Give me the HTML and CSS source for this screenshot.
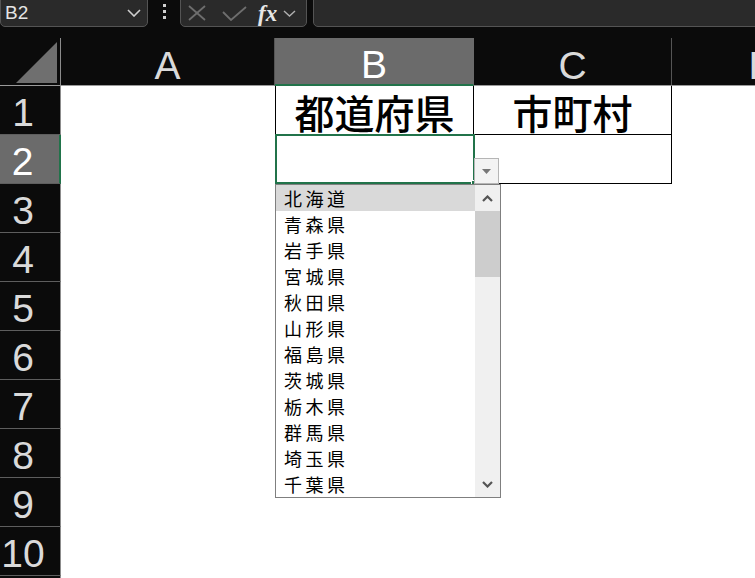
FILE: index.html
```html
<!DOCTYPE html>
<html lang="ja">
<head>
    <meta charset="UTF-8">
    <title>Book1 - Excel</title>
    <link rel="stylesheet" href="styles.css">
</head>
<body>
    <!-- name box + formula bar -->
    <div class="topbar">
        <div class="name-box">
            <span class="name-text">B2</span>
            <svg class="chevron" width="14" height="8" viewBox="0 0 14 8"><polyline points="1,1 7,7 13,1" /></svg>
        </div>
        <div class="bar-grip"><i></i><i></i><i></i></div>
        <div class="fx-tools">
            <svg class="tool-x" width="18" height="16" viewBox="0 0 18 16"><line x1="1" y1="1" x2="17" y2="15" /><line x1="17" y1="1" x2="1" y2="15" /></svg>
            <svg class="tool-check" width="25" height="15" viewBox="0 0 25 15"><polyline points="1,6 9,14 24,1" /></svg>
            <span class="tool-fx">fx</span>
            <svg class="chevron small" width="13" height="7" viewBox="0 0 13 7"><polyline points="1,1 6.5,6 12,1" /></svg>
        </div>
        <div class="formula-input"></div>
    </div>

    <!-- worksheet -->
    <div class="sheet">
        <div class="corner">
            <svg width="41" height="41" viewBox="0 0 41 41"><polygon points="41,0 41,41 0,41" /></svg>
        </div>
        <div class="col-head">A</div>
        <div class="col-head selected">B</div>
        <div class="col-head">C</div>
        <div class="col-head">D</div>

        <div class="row-head">1</div>
        <div class="row-head selected">2</div>
        <div class="row-head">3</div>
        <div class="row-head">4</div>
        <div class="row-head">5</div>
        <div class="row-head">6</div>
        <div class="row-head">7</div>
        <div class="row-head">8</div>
        <div class="row-head">9</div>
        <div class="row-head">10</div>
        <div class="row-head"></div>

        <div class="cell b1">都道府県</div>
        <div class="cell c1">市町村</div>
        <div class="cell c2"></div>
        <div class="cell b2">
            <div class="selection"><span class="fill-handle"></span></div>
            <div class="dropdown-btn">
                <svg width="9" height="5" viewBox="0 0 9 5"><polygon points="0,0 9,0 4.5,5" /></svg>
            </div>
            <div class="dropdown-list">
                <ul class="options">
                    <li class="active">北海道</li>
                    <li>青森県</li>
                    <li>岩手県</li>
                    <li>宮城県</li>
                    <li>秋田県</li>
                    <li>山形県</li>
                    <li>福島県</li>
                    <li>茨城県</li>
                    <li>栃木県</li>
                    <li>群馬県</li>
                    <li>埼玉県</li>
                    <li>千葉県</li>
                </ul>
                <div class="scrollbar">
                    <div class="scroll-btn">
                        <svg width="11" height="7" viewBox="0 0 11 7"><polyline points="1,6 5.5,1.5 10,6" /></svg>
                    </div>
                    <div class="scroll-thumb"></div>
                    <div class="scroll-track"></div>
                    <div class="scroll-btn">
                        <svg width="11" height="7" viewBox="0 0 11 7"><polyline points="1,1 5.5,5.5 10,1" /></svg>
                    </div>
                </div>
            </div>
        </div>
    </div>
</body>
</html>
```

FILE: styles.css
```css
body {
    margin: 0;
    background-color: #0b0b0b;
    font-family: "Liberation Sans", Arial, sans-serif;
    overflow: hidden;
}

/* ---------- formula bar ---------- */

.topbar {
    display: flex;
    align-items: flex-start;
    height: 27px;
}

.name-box,
.fx-tools,
.formula-input {
    box-sizing: border-box;
    height: 33px;
    margin-top: -6px;
    background-color: #2a2a2a;
    border: 1px solid #545454;
    border-radius: 5px;
}

.name-box {
    width: 148px;
    display: flex;
    align-items: center;
    justify-content: space-between;
    padding: 5px 6px 0 4px;
}

.name-text {
    color: #e4e4e4;
    font-size: 19px;
}

.chevron polyline {
    fill: none;
    stroke: #cfcfcf;
    stroke-width: 1.6;
}

.chevron.small polyline {
    stroke: #b0b0b0;
    stroke-width: 1.4;
}

.bar-grip {
    width: 32px;
    display: flex;
    flex-direction: column;
    align-items: center;
    gap: 3px;
    padding-top: 4px;
}

.bar-grip i {
    width: 3px;
    height: 3px;
    background-color: #cfcfcf;
}

.fx-tools {
    width: 127px;
    display: flex;
    align-items: center;
    padding: 5px 0 0 7px;
}

.tool-x line,
.tool-check polyline {
    fill: none;
    stroke: #6e6e6e;
    stroke-width: 1.8;
}

.tool-check {
    margin-left: 16px;
}

.tool-fx {
    margin-left: 11px;
    color: #e6e6e6;
    font-family: "Liberation Serif", serif;
    font-style: italic;
    font-weight: bold;
    font-size: 23px;
    line-height: 1;
}

.fx-tools .chevron {
    margin-left: 6px;
}

.formula-input {
    flex: 1;
    margin-left: 6px;
    margin-right: -8px;
}

/* ---------- grid ---------- */

.sheet {
    margin-top: 11px;
    display: grid;
    grid-template-columns: 61px 214px 199px 198px 182px;
    grid-template-rows: 48px repeat(11, 49px);
    background-color: #fff;
}

.corner {
    box-sizing: border-box;
    display: flex;
    justify-content: flex-end;
    align-items: flex-end;
    padding: 0 3px 2px 0;
    background-color: #0b0b0b;
    border-right: 1px solid #8c8c8c;
    border-bottom: 1px solid #9a9a9a;
}

.corner polygon {
    fill: #6f6f6f;
}

.col-head,
.row-head {
    box-sizing: border-box;
    display: flex;
    align-items: center;
    justify-content: center;
    background-color: #0b0b0b;
    color: #dadada;
    font-size: 39px;
}

.col-head {
    padding-top: 8px;
    border-right: 1px solid #555;
    border-bottom: 1px solid #9a9a9a;
}

.col-head.selected {
    background-color: #6b6b6b;
    color: #fff;
    border-right-color: #6b6b6b;
    border-bottom: 2px solid #21734a;
}

.row-head {
    grid-column: 1;
    padding: 5px 14px 0 0;
    border-right: 1px solid #8c8c8c;
    border-bottom: 1px solid #5e5e5e;
}

.row-head.selected {
    background-color: #6b6b6b;
    color: #fff;
    border-right: 2px solid #21734a;
}

/* ---------- cells ---------- */

.cell {
    box-sizing: border-box;
    display: flex;
    align-items: center;
    justify-content: center;
    font-family: "Noto Sans CJK JP", sans-serif;
    font-weight: 500;
    font-size: 40px;
    line-height: 1;
    color: #000;
    padding-top: 4px;
}

.b1 {
    grid-area: 2 / 3;
    border: 1px solid #000;
    border-top: none;
}

.c1 {
    grid-area: 2 / 4;
    border-right: 1px solid #000;
    border-bottom: 1px solid #000;
}

.b2 {
    grid-area: 3 / 3;
    position: relative;
    z-index: 2;
    border: 1px solid #000;
    border-top: none;
}

.c2 {
    grid-area: 3 / 4;
    border-right: 1px solid #000;
    border-bottom: 1px solid #000;
}

.selection {
    position: absolute;
    top: -1px;
    left: -1px;
    right: -2px;
    bottom: -1px;
    border: 2px solid #21734a;
}

.fill-handle {
    position: absolute;
    right: -5px;
    bottom: -5px;
    width: 5px;
    height: 5px;
    background-color: #21734a;
    border: 1px solid #fff;
}

/* ---------- validation dropdown ---------- */

.dropdown-btn {
    position: absolute;
    left: 198px;
    top: 23px;
    box-sizing: border-box;
    width: 25px;
    height: 26px;
    display: flex;
    align-items: center;
    justify-content: center;
    background-color: #f3f3f3;
    border: 1px solid #b5b5b5;
}

.dropdown-btn polygon {
    fill: #777;
}

.dropdown-list {
    position: absolute;
    left: -1px;
    top: 49px;
    box-sizing: border-box;
    width: 226px;
    height: 314px;
    display: flex;
    background-color: #fff;
    border: 1px solid #7f7f7f;
}

.options {
    flex: 1;
    margin: 0;
    padding: 0;
    list-style: none;
}

.options li {
    height: 26px;
    line-height: 26px;
    padding-left: 8px;
    font-size: 18px;
    font-weight: 400;
    letter-spacing: 3.5px;
    color: #000;
    text-align: left;
}

.options li.active {
    background-color: #d9d9d9;
}

.scrollbar {
    width: 25px;
    display: flex;
    flex-direction: column;
    background-color: #f0f0f0;
}

.scroll-btn {
    height: 26px;
    display: flex;
    align-items: center;
    justify-content: center;
}

.scroll-btn polyline {
    fill: none;
    stroke: #555;
    stroke-width: 2.2;
}

.scroll-thumb {
    height: 66px;
    background-color: #cdcdcd;
}

.scroll-track {
    flex: 1;
}
```
